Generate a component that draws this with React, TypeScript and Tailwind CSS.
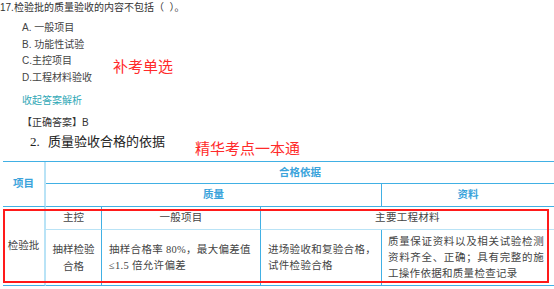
const sans = "font-['Liberation_Sans','Noto_Sans_CJK_SC',sans-serif]";
const serif = "font-['Liberation_Serif','Noto_Sans_CJK_SC',serif]";

export default function App() {
  return (
    <div className={`relative w-[554px] h-[289px] overflow-hidden bg-white ${sans}`}>
      {/* Question */}
      <div className="h-[16px] text-[10px] leading-[16px] text-[#333]">
        17.检验批的质量验收的内容不包括（{"\u00a0\u00a0"}）。
      </div>
      <div className="flex pl-[22px]">
        <div className="w-[91px] pt-[4px] text-[10px] leading-[16.5px] text-[#444]">
          <div>A. 一般项目</div>
          <div>B. 功能性试验</div>
          <div>C.主控项目</div>
          <div>D.工程材料验收</div>
        </div>
        <div className="mt-[41px] text-[15px] leading-[20px] text-[#ff2a2a]">补考单选</div>
      </div>
      <div className="mt-[7px] pl-[22px] text-[10px] leading-[16px] text-[#2fa8b6]">收起答案解析</div>
      <div className="mt-[6px] pl-[22px] text-[10px] leading-[16px] text-[#333]">【正确答案】B</div>

      {/* Section heading */}
      <div className="flex h-[30px] pl-[30px]">
        <div className={`w-[165px] mt-[2px] text-[13px] leading-[18px] text-[#222] ${serif}`}>
          <span className="inline-block w-[18px]">2.</span>质量验收合格的依据
        </div>
        <div className="mt-[8px] text-[15px] leading-[20px] text-[#ff2a2a]">精华考点一本通</div>
      </div>

      {/* Table */}
      <div className="ml-[3px] grid grid-cols-[43px_56px_159px_121px_172px] grid-rows-[22px_23px_23px_56px] border-t border-[#41b0e4] text-[10.5px]">
        <div className="row-span-2 flex items-center justify-center border-r-2 border-b border-r-[#b9e3f6] border-b-[#41b0e4] font-bold text-[#3aa3db]">
          项目
        </div>
        <div className="col-span-4 flex items-center justify-center border-b border-[#41b0e4] font-bold text-[#3aa3db]">
          合格依据
        </div>
        <div className="col-span-3 flex items-center justify-center border-r border-b border-[#41b0e4] font-bold text-[#3aa3db]">
          质量
        </div>
        <div className="flex items-center justify-center border-b border-[#41b0e4] font-bold text-[#3aa3db]">
          资料
        </div>

        <div className={`row-span-2 flex items-center justify-center border-r-2 border-b border-r-[#b9e3f6] border-b-[#41b0e4] text-[#444] ${serif}`}>
          检验批
        </div>
        <div className={`flex items-center justify-center border-r border-b border-r-[#41b0e4] border-b-[#b9e3f6] text-[#444] ${serif}`}>
          主控
        </div>
        <div className={`flex items-center justify-center border-r border-b border-r-[#41b0e4] border-b-[#b9e3f6] tracking-[0.3px] text-[#444] ${serif}`}>
          一般项目
        </div>
        <div className={`col-span-2 flex items-center justify-center border-b border-[#b9e3f6] tracking-[0.3px] text-[#444] ${serif}`}>
          主要工程材料
        </div>

        <div className={`flex items-center justify-center border-r border-b border-[#41b0e4] text-center leading-[17px] text-[#444] ${serif}`}>
          <div>抽样检验<br />合格</div>
        </div>
        <div className={`flex items-center border-r border-b border-[#41b0e4] pl-[7px] leading-[16px] tracking-[0.3px] text-[#444] ${serif}`}>
          <div>抽样合格率 80%，最大偏差值<br />≤1.5 倍允许偏差</div>
        </div>
        <div className={`flex items-center border-r border-b border-[#41b0e4] pl-[7px] leading-[16px] tracking-[0.3px] text-[#444] ${serif}`}>
          <div>进场验收和复验合格，<br />试件检验合格</div>
        </div>
        <div className={`flex items-center border-b border-[#41b0e4] pl-[6px] pr-[10px] leading-[16px] tracking-[0.3px] text-[#444] ${serif}`}>
          <div className="w-full text-justify">质量保证资料以及相关试验检测资料齐全、正确；具有完整的施工操作依据和质量检查记录</div>
        </div>
      </div>

      {/* Red annotation box */}
      <div className="absolute left-[3px] top-[209px] w-[546px] h-[74px] border-2 border-[#ff1a1a]" />
    </div>
  );
}
